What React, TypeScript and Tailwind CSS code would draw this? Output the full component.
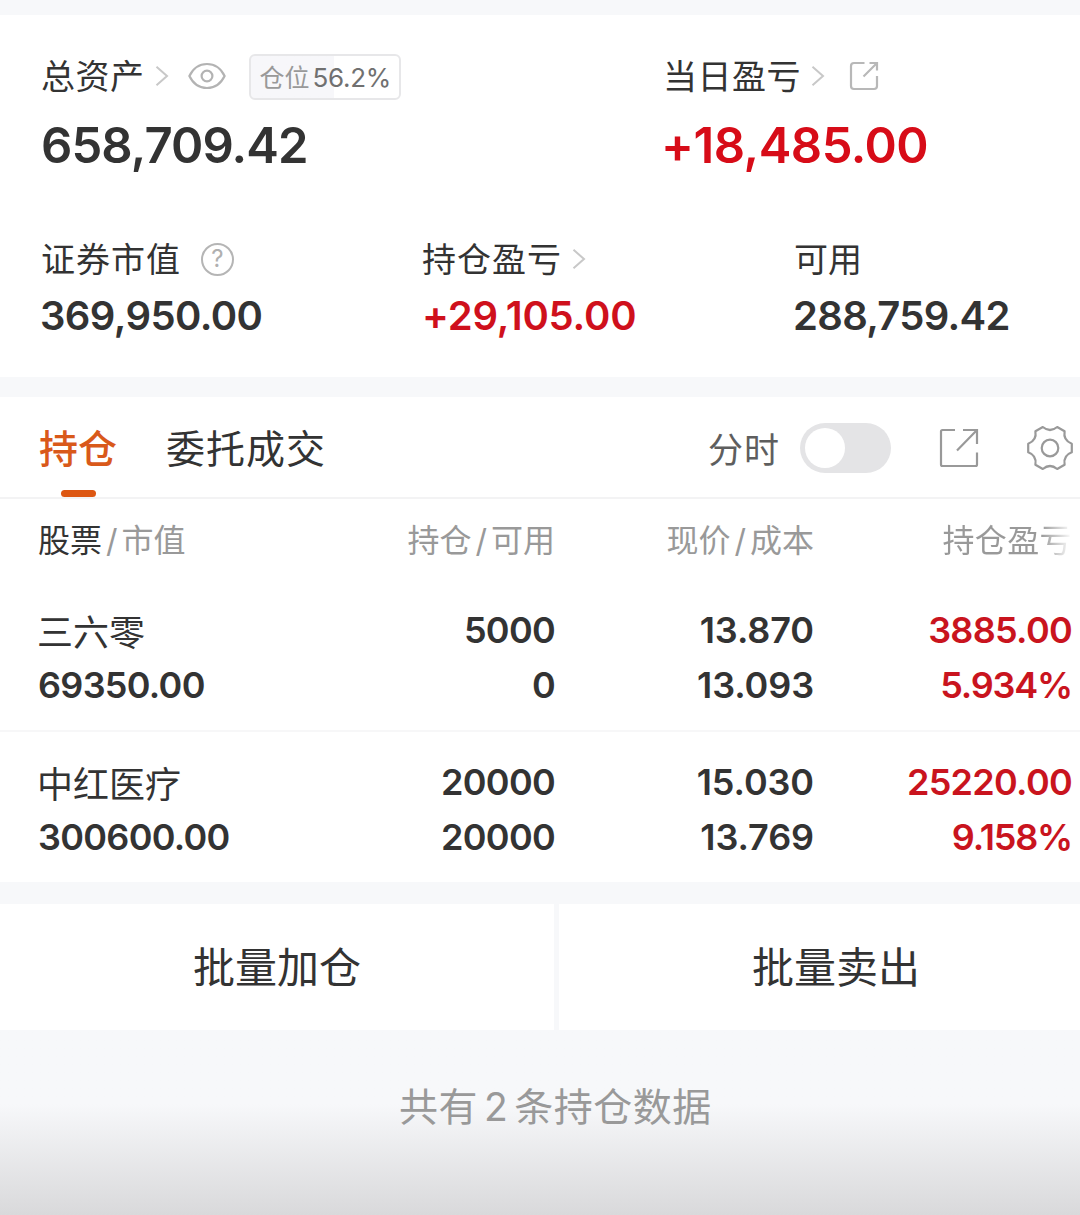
import React from 'react'

const Chevron = ({ className = '' }: { className?: string }) => (
  <svg
    className={`h-5 w-3.5 ${className}`}
    viewBox="0 0 14 20"
    fill="none"
    stroke="#c8c8c8"
    strokeWidth="2"
  >
    <path d="M1.5 0.8 12 10 1.5 19.2" />
  </svg>
)

const Eye = () => (
  <svg
    className="h-7 w-[38px]"
    viewBox="0 0 38 28"
    fill="none"
    stroke="#b3b3b3"
    strokeWidth="2.2"
  >
    <path d="M1.4 14C5 6.5 11.5 2 19 2s14 4.5 17.6 12C33 21.5 26.5 26 19 26S5 21.5 1.4 14Z" />
    <circle cx="19" cy="14" r="5.4" />
  </svg>
)

const ShareSmall = () => (
  <svg
    className="h-[30px] w-[30px]"
    viewBox="0 0 30 30"
    fill="none"
    stroke="#b8b8b8"
    strokeWidth="2.2"
  >
    <path d="M15.5 2H5a3 3 0 0 0-3 3v20a3 3 0 0 0 3 3h20a3 3 0 0 0 3-3V15" />
    <path d="M20.5 2H28v7.5M28 2 14.5 15.5" />
  </svg>
)

const Share = () => (
  <svg
    className="h-10 w-10"
    viewBox="0 0 40 40"
    fill="none"
    stroke="#999999"
    strokeWidth="2.2"
  >
    <path d="M16 2H3.5A1.5 1.5 0 0 0 2 3.5v33A1.5 1.5 0 0 0 3.5 38h33a1.5 1.5 0 0 0 1.5-1.5V24.5" />
    <path d="M24 2h14v14M38 2 18 22.5" />
  </svg>
)

const Gear = () => (
  <svg
    className="h-12 w-12"
    viewBox="-24 -24 48 48"
    fill="none"
    stroke="#999999"
    strokeWidth="2.2"
    strokeLinejoin="round"
  >
    <path d="M21.8-4.3V4.3Q13 7.5 14.6 16.7L7.2 21Q0 15-7.2 21L-14.6 16.7Q-13 7.5-21.8 4.3V-4.3Q-13-7.5-14.6-16.7L-7.2-21Q0-15 7.2-21L14.6-16.7Q13-7.5 21.8-4.3Z" />
    <circle r="8.3" />
  </svg>
)

const Help = () => (
  <span className="flex h-[33px] w-[33px] items-center justify-center rounded-full border-2 border-[#b5b5b5] text-[24px] leading-none text-[#b0b0b0]">
    ?
  </span>
)

const holdings = [
  {
    name: '三六零',
    value: '69350.00',
    amount: '5000',
    available: '0',
    price: '13.870',
    cost: '13.093',
    profit: '3885.00',
    percent: '5.934%',
  },
  {
    name: '中红医疗',
    value: '300600.00',
    amount: '20000',
    available: '20000',
    price: '15.030',
    cost: '13.769',
    profit: '25220.00',
    percent: '9.158%',
  },
]

const Summary = () => (
  <section className="h-[362px] bg-white pt-[37px]">
    <div className="flex pl-[41px]">
      <div className="w-[622px]">
        <div className="flex h-12 items-center">
          <span className="text-[34px] tracking-[0.5px]">总资产</span>
          <Chevron className="ml-2.5 mr-[19px]" />
          <Eye />
          <div className="mt-0.5 ml-[23px] flex h-[46px] w-[152px] items-center rounded-md border-2 border-[#e7e7e9] bg-linear-to-r from-[#f7f7fa] from-56% to-white to-56% pl-[9px] text-[25px] text-[#999999]">
            <span className="pt-1">仓位</span>
            <span className="ml-[3px] text-[26px] tracking-[-0.3px] text-[#707070]">
              56.2%
            </span>
          </div>
        </div>
        <p className="mt-4 text-[49px] font-semibold leading-[60px] tracking-[-0.9px]">
          658,709.42
        </p>
      </div>
      <div>
        <div className="flex h-12 items-center">
          <span className="text-[34px] tracking-[0.5px]">当日盈亏</span>
          <Chevron className="ml-2.5 mr-6" />
          <ShareSmall />
        </div>
        <p className="-ml-0.5 mt-4 text-[49px] font-semibold leading-[60px] tracking-[-0.5px] text-[#d70c18]">
          +18,485.00
        </p>
      </div>
    </div>

    <div className="mt-[59px] flex pl-[41px]">
      <div className="w-[381px]">
        <div className="flex h-12 items-center">
          <span className="mr-5 text-[34px] tracking-[1px]">证券市值</span>
          <Help />
        </div>
        <p className="-ml-px mt-[7px] text-[40px] font-semibold leading-[52px] tracking-[-0.6px]">
          369,950.00
        </p>
      </div>
      <div className="w-[372px]">
        <div className="flex h-12 items-center">
          <span className="text-[34px] tracking-[1px]">持仓盈亏</span>
          <Chevron className="ml-2.5" />
        </div>
        <p className="mt-[7px] text-[40px] font-semibold leading-[52px] tracking-[-0.2px] text-[#cf101c]">
          +29,105.00
        </p>
      </div>
      <div>
        <div className="flex h-12 items-center">
          <span className="text-[34px]">可用</span>
        </div>
        <p className="-ml-px mt-[7px] text-[40px] font-semibold leading-[52px] tracking-[-0.7px]">
          288,759.42
        </p>
      </div>
    </div>
  </section>
)

const Tabs = () => (
  <div className="flex h-[102px] items-center border-b-2 border-[#f3f3f4] pl-[38px] pr-[6px] pt-0.5">
    <div className="flex h-full w-20 flex-col items-center justify-end">
      <span className="text-[39px] font-medium leading-[60px] text-[#d9591a]">
        持仓
      </span>
      <span className="mt-[11px] h-[7px] w-[35px] rounded-full bg-[#dd5712]" />
    </div>
    <span className="ml-12 pt-0.5 text-[39px] tracking-[1px]">委托成交</span>
    <span className="ml-auto pt-1 text-[35px] tracking-[1px] text-[#5e5e5e]">
      分时
    </span>
    <div className="ml-5 flex h-[50px] w-[91px] items-center rounded-full bg-[#e4e4e6] pl-[5px]">
      <span className="h-10 w-10 rounded-full bg-white" />
    </div>
    <div className="ml-12 mr-[47px]">
      <Share />
    </div>
    <Gear />
  </div>
)

const Holdings = () => (
  <>
    <div className="grid h-[81px] grid-cols-[258px_259px_259px_258px] items-center pl-[38px] pt-[3px] text-right text-[32px] text-[#999999]">
      <span className="text-left">
        <span className="text-[#333333]">股票</span>
        <span className="mx-1">/</span>
        市值
      </span>
      <span>
        持仓<span className="mx-1">/</span>可用
      </span>
      <span>
        现价<span className="mx-1">/</span>成本
      </span>
      <span className="bg-linear-to-r from-[#999999] from-88% to-white bg-clip-text tracking-[0.4px] text-transparent">
        持仓盈亏
      </span>
    </div>
    {holdings.map((item) => (
      <div
        key={item.name}
        className="grid h-[152px] grid-cols-[258px_259px_259px_258px] border-b-2 border-[#f7f7f8] pl-[38px] pt-[23px] text-right text-[36px] font-semibold leading-[55px] tracking-[-0.7px] last:border-b-0"
      >
        <div className="text-left">
          <p className="-ml-px h-[55px] pt-[3px] font-normal tracking-normal">
            {item.name}
          </p>
          <p>{item.value}</p>
        </div>
        <div>
          <p>{item.amount}</p>
          <p>{item.available}</p>
        </div>
        <div className="tracking-[-0.1px]">
          <p>{item.price}</p>
          <p>{item.cost}</p>
        </div>
        <div className="text-[#c9141e]">
          <p>{item.profit}</p>
          <p className="tracking-[-1.2px]">{item.percent}</p>
        </div>
      </div>
    ))}
  </>
)

const App = () => {
  return (
    <main className="flex h-[1215px] w-[1080px] flex-col overflow-hidden whitespace-nowrap bg-[#f7f8fa] pt-[15px] font-['Inter','Noto_Sans_CJK_SC',sans-serif] text-[#333333] [font-feature-settings:'calt'_0]">
      <Summary />
      <section className="mt-5 h-[485px] overflow-hidden bg-white">
        <Tabs />
        <Holdings />
      </section>
      <div className="mt-[22px] flex h-[126px] gap-[5px] text-[42px] leading-[128px]">
        <button className="w-[554px] shrink-0 bg-white">批量加仓</button>
        <button className="w-[554px] shrink-0 bg-white">批量卖出</button>
      </div>
      <footer className="flex-1 bg-linear-to-b from-[#f7f8fa] from-40% to-[#d9d9db] pl-[399px] pt-[47px] text-[39px] leading-[60px] tracking-[0.5px] text-[#999999]">
        共有<span className="mx-1.5">2</span>条持仓数据
      </footer>
    </main>
  )
}

export default App
